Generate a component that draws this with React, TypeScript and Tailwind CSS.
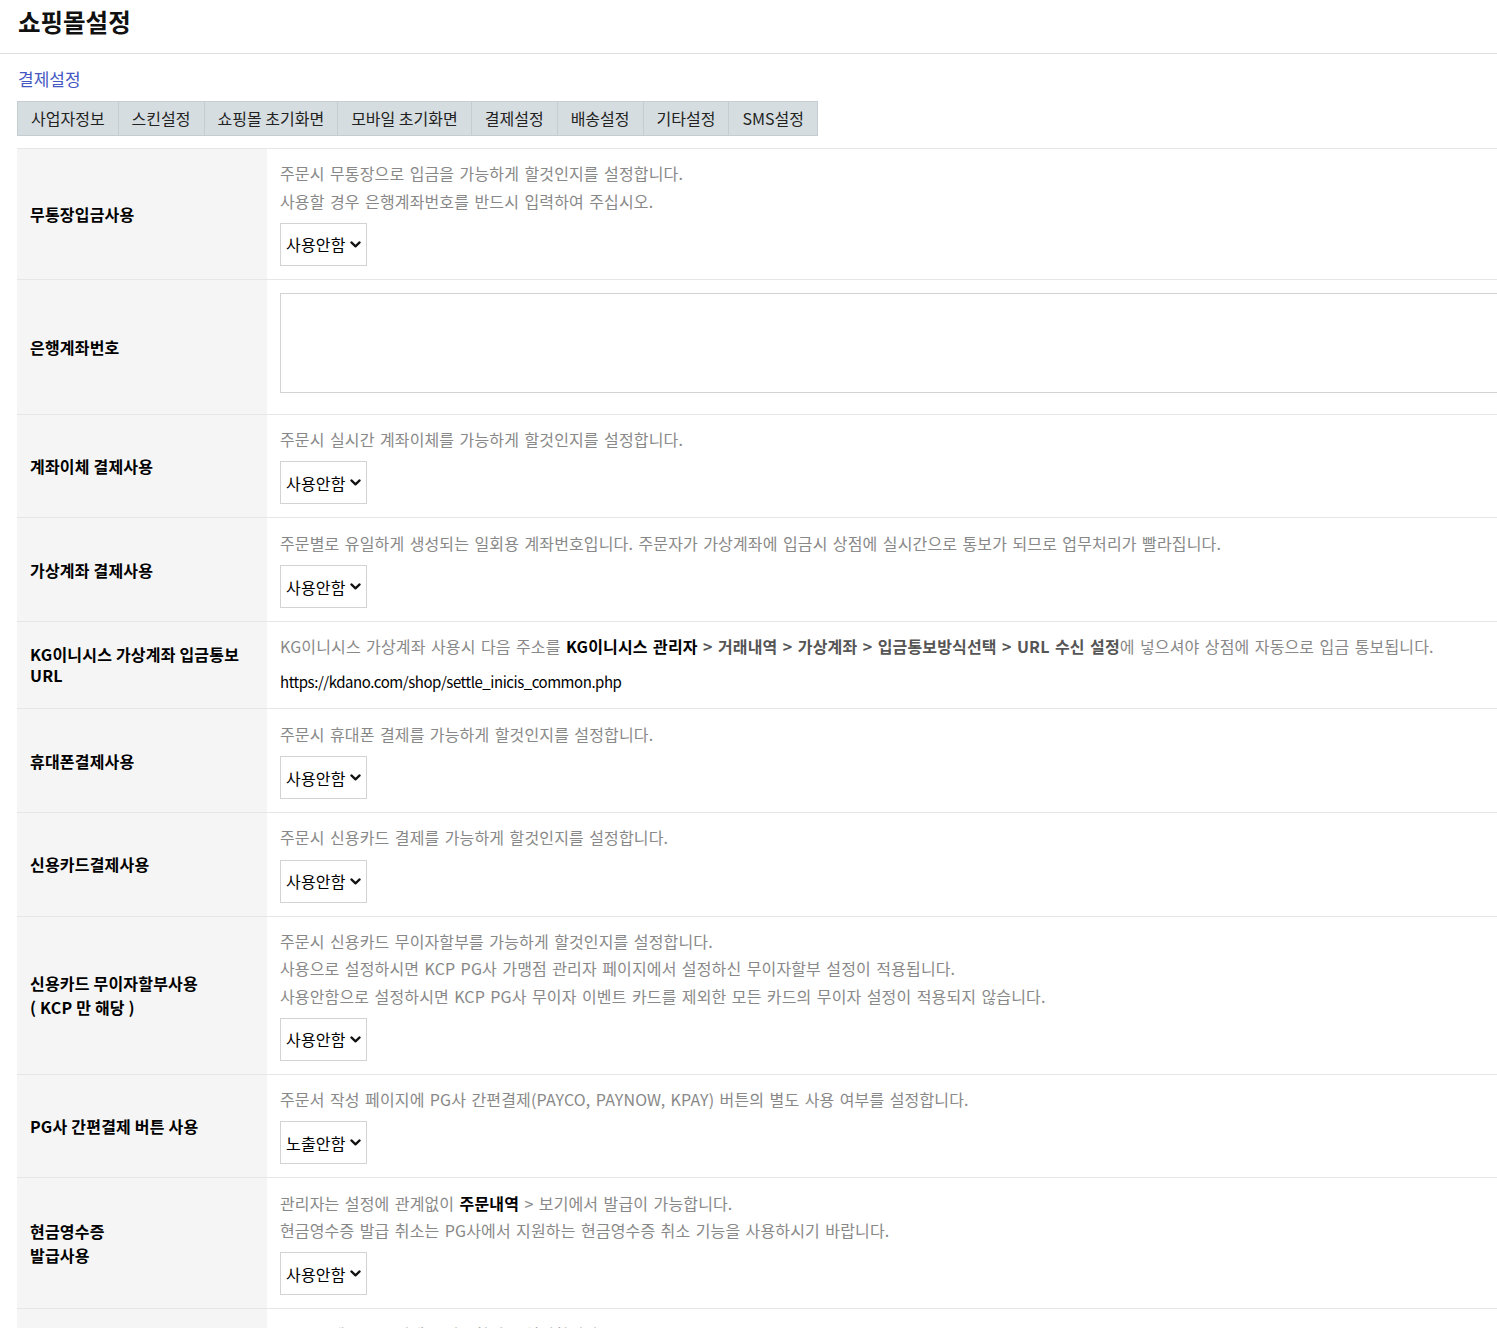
import React from 'react';

const tabs = ['사업자정보', '스킨설정', '쇼핑몰 초기화면', '모바일 초기화면', '결제설정', '배송설정', '기타설정', 'SMS설정'];

interface SettingRow {
  id: string;
  label: React.ReactNode;
  labelLeading?: string;
  desc?: React.ReactNode[];
  control: 'select' | 'textarea' | 'url';
  value?: string;
}

const Chevron = () => <svg width="11" height="7" viewBox="0 0 11 7" className="shrink-0">
    <path d="M1.4 1.4 5.5 5.4 9.6 1.4" fill="none" stroke="#111" strokeWidth="2.2" strokeLinecap="round" strokeLinejoin="round" />
  </svg>;

const SelectBox = ({
  value
}: {
  value: string;
}) => <div className="mt-[8px] flex h-[43px] w-[87px] items-center gap-[4px] border border-[#d3d3d3] bg-white pl-[5px] text-[16px] tracking-[0.2px] text-black">
    <span>{value}</span>
    <Chevron />
  </div>;

const Strong = ({
  children
}: {
  children: React.ReactNode;
}) => <b className="font-bold text-black">{children}</b>;

const Path = ({
  children
}: {
  children: React.ReactNode;
}) => <b className="font-bold text-[#555]">{children}</b>;

const rows: SettingRow[] = [{
  id: 'bank',
  label: '무통장입금사용',
  desc: ['주문시 무통장으로 입금을 가능하게 할것인지를 설정합니다.', '사용할 경우 은행계좌번호를 반드시 입력하여 주십시오.'],
  control: 'select',
  value: '사용안함'
}, {
  id: 'account',
  label: '은행계좌번호',
  control: 'textarea'
}, {
  id: 'iche',
  label: '계좌이체 결제사용',
  desc: ['주문시 실시간 계좌이체를 가능하게 할것인지를 설정합니다.'],
  control: 'select',
  value: '사용안함'
}, {
  id: 'vbank',
  label: '가상계좌 결제사용',
  desc: ['주문별로 유일하게 생성되는 일회용 계좌번호입니다. 주문자가 가상계좌에 입금시 상점에 실시간으로 통보가 되므로 업무처리가 빨라집니다.'],
  control: 'select',
  value: '사용안함'
}, {
  id: 'inicis',
  label: 'KG이니시스 가상계좌 입금통보 URL',
  labelLeading: 'leading-[21px]',
  desc: [<>
      KG이니시스 가상계좌 사용시 다음 주소를 <Strong>KG이니시스 관리자</Strong> <Path>&gt; 거래내역 &gt; 가상계좌 &gt; 입금통보방식선택 &gt; URL 수신 설정</Path>에 넣으셔야 상점에 자동으로 입금 통보됩니다.
    </>],
  control: 'url'
}, {
  id: 'hp',
  label: '휴대폰결제사용',
  desc: ['주문시 휴대폰 결제를 가능하게 할것인지를 설정합니다.'],
  control: 'select',
  value: '사용안함'
}, {
  id: 'card',
  label: '신용카드결제사용',
  desc: ['주문시 신용카드 결제를 가능하게 할것인지를 설정합니다.'],
  control: 'select',
  value: '사용안함'
}, {
  id: 'noint',
  label: <>신용카드 무이자할부사용<br />( KCP 만 해당 )</>,
  desc: ['주문시 신용카드 무이자할부를 가능하게 할것인지를 설정합니다.', '사용으로 설정하시면 KCP PG사 가맹점 관리자 페이지에서 설정하신 무이자할부 설정이 적용됩니다.', '사용안함으로 설정하시면 KCP PG사 무이자 이벤트 카드를 제외한 모든 카드의 무이자 설정이 적용되지 않습니다.'],
  control: 'select',
  value: '사용안함'
}, {
  id: 'easypay',
  label: 'PG사 간편결제 버튼 사용',
  desc: ['주문서 작성 페이지에 PG사 간편결제(PAYCO, PAYNOW, KPAY) 버튼의 별도 사용 여부를 설정합니다.'],
  control: 'select',
  value: '노출안함'
}, {
  id: 'receipt',
  label: <>현금영수증<br />발급사용</>,
  desc: [<>관리자는 설정에 관계없이 <Strong>주문내역</Strong> &gt; 보기에서 발급이 가능합니다.</>, '현금영수증 발급 취소는 PG사에서 지원하는 현금영수증 취소 기능을 사용하시기 바랍니다.'],
  control: 'select',
  value: '사용안함'
}, {
  id: 'escrow',
  label: '에스크로사용',
  desc: ['주문시 에스크로 결제를 사용할지를 설정합니다.', '에스크로 사용시 PG사 관리자에서도 설정하셔야 합니다.'],
  control: 'select',
  value: '사용안함'
}];

export default function App() {
  return <div className="h-screen overflow-hidden bg-white text-[16px] text-[#222]" style={{
    fontFamily: '"Noto Sans CJK KR", "Noto Sans", sans-serif'
  }}>
      <header className="h-[54px] border-b border-[#dedede] pl-[18px] pt-[5px]">
        <h1 className="text-[24.5px] font-bold leading-[34px] text-[#111]">쇼핑몰설정</h1>
      </header>

      <div className="pl-[17px]">
        <h2 className="mt-[13px] pl-[1px] text-[17px] leading-[24px] text-[#4557c2]">결제설정</h2>

        <nav className="mt-[10px] flex">
          <div className="flex border border-[#c6cdd2] bg-[#d6dde1]">
            {tabs.map((tab, i) => <span key={tab} className={`px-[13px] text-[16px] leading-[33px] text-[#222] ${i < tabs.length - 1 ? 'border-r border-[#c6cdd2]' : ''}`}>
                {tab}
              </span>)}
          </div>
        </nav>

        <div className="mt-[12px] border-t border-[#e6e6e6]">
          {rows.map(row => <div key={row.id} className="flex border-b border-[#e6e6e6]">
              <div className={`flex w-[250px] shrink-0 items-center bg-[#f5f5f5] px-[13px] text-[16px] font-bold tracking-[0.2px] text-black ${row.labelLeading ?? 'leading-[24px]'}`}>
                <div>{row.label}</div>
              </div>
              {row.control === 'textarea' ? <div className="min-w-0 flex-1 pl-[13px] pt-[13px] pb-[21px]">
                  <textarea className="block h-[100px] w-[1300px] resize-none border border-[#d3d3d3] bg-white outline-none" />
                </div> : <div className="min-w-0 flex-1 pl-[13px] pt-[11.3px] pb-[13px]">
                  {row.desc?.map((line, i) => <p key={i} className="whitespace-nowrap text-[16px] leading-[27.3px] tracking-[0.15px] text-[#888] [word-spacing:1.6px]">
                      {line}
                    </p>)}
                  {row.control === 'select' && row.value && <SelectBox value={row.value} />}
                  {row.control === 'url' && <p className="mt-[7.5px] text-[15px] leading-[27.3px] tracking-[-0.45px] text-black">
                      https://kdano.com/shop/settle_inicis_common.php
                    </p>}
                </div>}
            </div>)}
        </div>
      </div>
    </div>;
}
